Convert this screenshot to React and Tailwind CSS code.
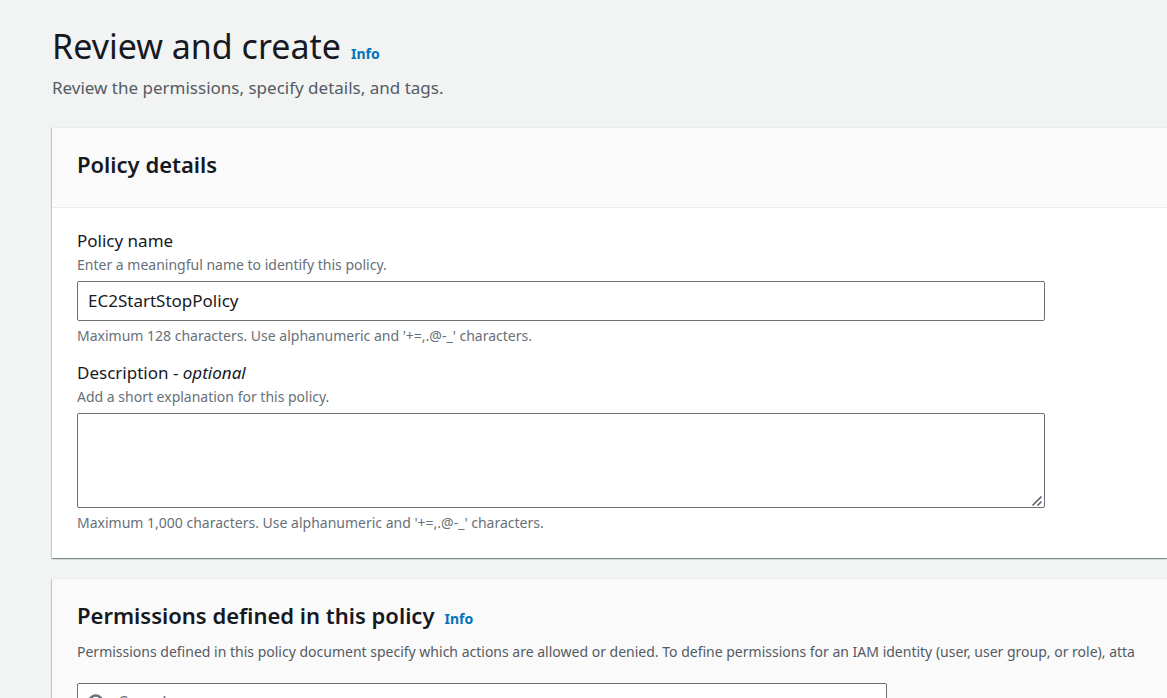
const fieldClass =
  'block w-full rounded-[2px] border border-[#687078] bg-white px-[10px] text-[17px] text-[#16191f] outline-none';

const smallText = 'text-[14px] leading-6';

function InfoLink() {
  return (
    <a href="#info" className="text-[14px] leading-5 font-bold text-[#0073bb]">
      Info
    </a>
  );
}

function Card({ header, children }) {
  return (
    <section className="border-t border-[#eaeded] bg-white shadow-[0_1px_1px_0_rgba(0,28,36,0.3),1px_1px_1px_0_rgba(0,28,36,0.15),-1px_1px_1px_0_rgba(0,28,36,0.15)]">
      <header className="border-b border-[#eaeded] bg-[#fafafa] pl-[25px]">{header}</header>
      {children}
    </section>
  );
}

function Field({ id, label, hint, constraint, children }) {
  return (
    <div className="max-w-[968px]">
      <label htmlFor={id} className="block text-[17px] leading-[25px]">
        {label}
      </label>
      <p id={id + '-hint'} className={smallText + ' pb-1 text-[#687078]'}>
        {hint}
      </p>
      {children}
      <p className={smallText + ' pt-[3px] text-[#687078]'}>{constraint}</p>
    </div>
  );
}

export default function App() {
  return (
    <main className="h-screen overflow-hidden bg-[#f2f3f3] pt-6 pl-[52px] font-['Noto_Sans',sans-serif] text-[#16191f]">
      <div className="flex items-baseline gap-[10px]">
        <h1 className="text-[34px] leading-[45px]">Review and create</h1>
        <InfoLink />
      </div>
      <p className="pt-[5px] text-[17px] leading-7 text-[#545b64]">
        Review the permissions, specify details, and tags.
      </p>

      <div className="flex flex-col gap-5 pt-[25px]">
        <Card
          header={<h2 className="pt-[21px] pb-7 text-[22px] leading-[30px] font-semibold">Policy details</h2>}
        >
          <div className="flex flex-col gap-3 px-[25px] pt-5 pb-[23px]">
            <Field
              id="policy-name"
              label="Policy name"
              hint="Enter a meaningful name to identify this policy."
              constraint="Maximum 128 characters. Use alphanumeric and '+=,.@-_' characters."
            >
              <input
                id="policy-name"
                type="text"
                defaultValue="EC2StartStopPolicy"
                aria-describedby="policy-name-hint"
                className={fieldClass + ' h-10 pb-[2px]'}
              />
            </Field>
            <Field
              id="description"
              label={
                <>
                  Description - <em>optional</em>
                </>
              }
              hint="Add a short explanation for this policy."
              constraint="Maximum 1,000 characters. Use alphanumeric and '+=,.@-_' characters."
            >
              <div className="relative">
                <textarea
                  id="description"
                  aria-describedby="description-hint"
                  className={fieldClass + ' h-[95px] resize-none py-1'}
                />
                <svg
                  viewBox="0 0 10 10"
                  className="pointer-events-none absolute right-[3px] bottom-[2px] size-[10px] fill-none stroke-[#545b64] stroke-[1.5]"
                  aria-hidden="true"
                >
                  <path d="M0.5 9.5l9-9M5.5 9.5l4-4" />
                </svg>
              </div>
            </Field>
          </div>
        </Card>

        <Card
          header={
            <div className="pt-[21px] pb-5">
              <div className="flex items-baseline gap-[10px]">
                <h2 className="text-[22px] leading-[30px] font-semibold">Permissions defined in this policy</h2>
                <InfoLink />
              </div>
              <p className={smallText + ' overflow-hidden pt-[10px] whitespace-nowrap text-[#545b64]'}>
                Permissions defined in this policy document specify which actions are allowed or denied. To define
                permissions for an IAM identity (user, user group, or role), atta
              </p>
              <div className="mt-[19px] flex h-10 max-w-[810px] items-center gap-3 rounded-[2px] border border-[#687078] bg-white px-[9px]">
                <svg viewBox="0 0 16 16" className="size-5 shrink-0 fill-none stroke-[#687078] stroke-2" aria-hidden="true">
                  <circle cx="7" cy="7" r="5" />
                  <path d="m15 15-4.5-4.5" />
                </svg>
                <input
                  type="search"
                  aria-label="Search"
                  placeholder="Search"
                  className="w-full bg-transparent pb-[2px] text-[17px] outline-none placeholder:text-[#687078]"
                />
              </div>
            </div>
          }
        />
      </div>
    </main>
  );
}
